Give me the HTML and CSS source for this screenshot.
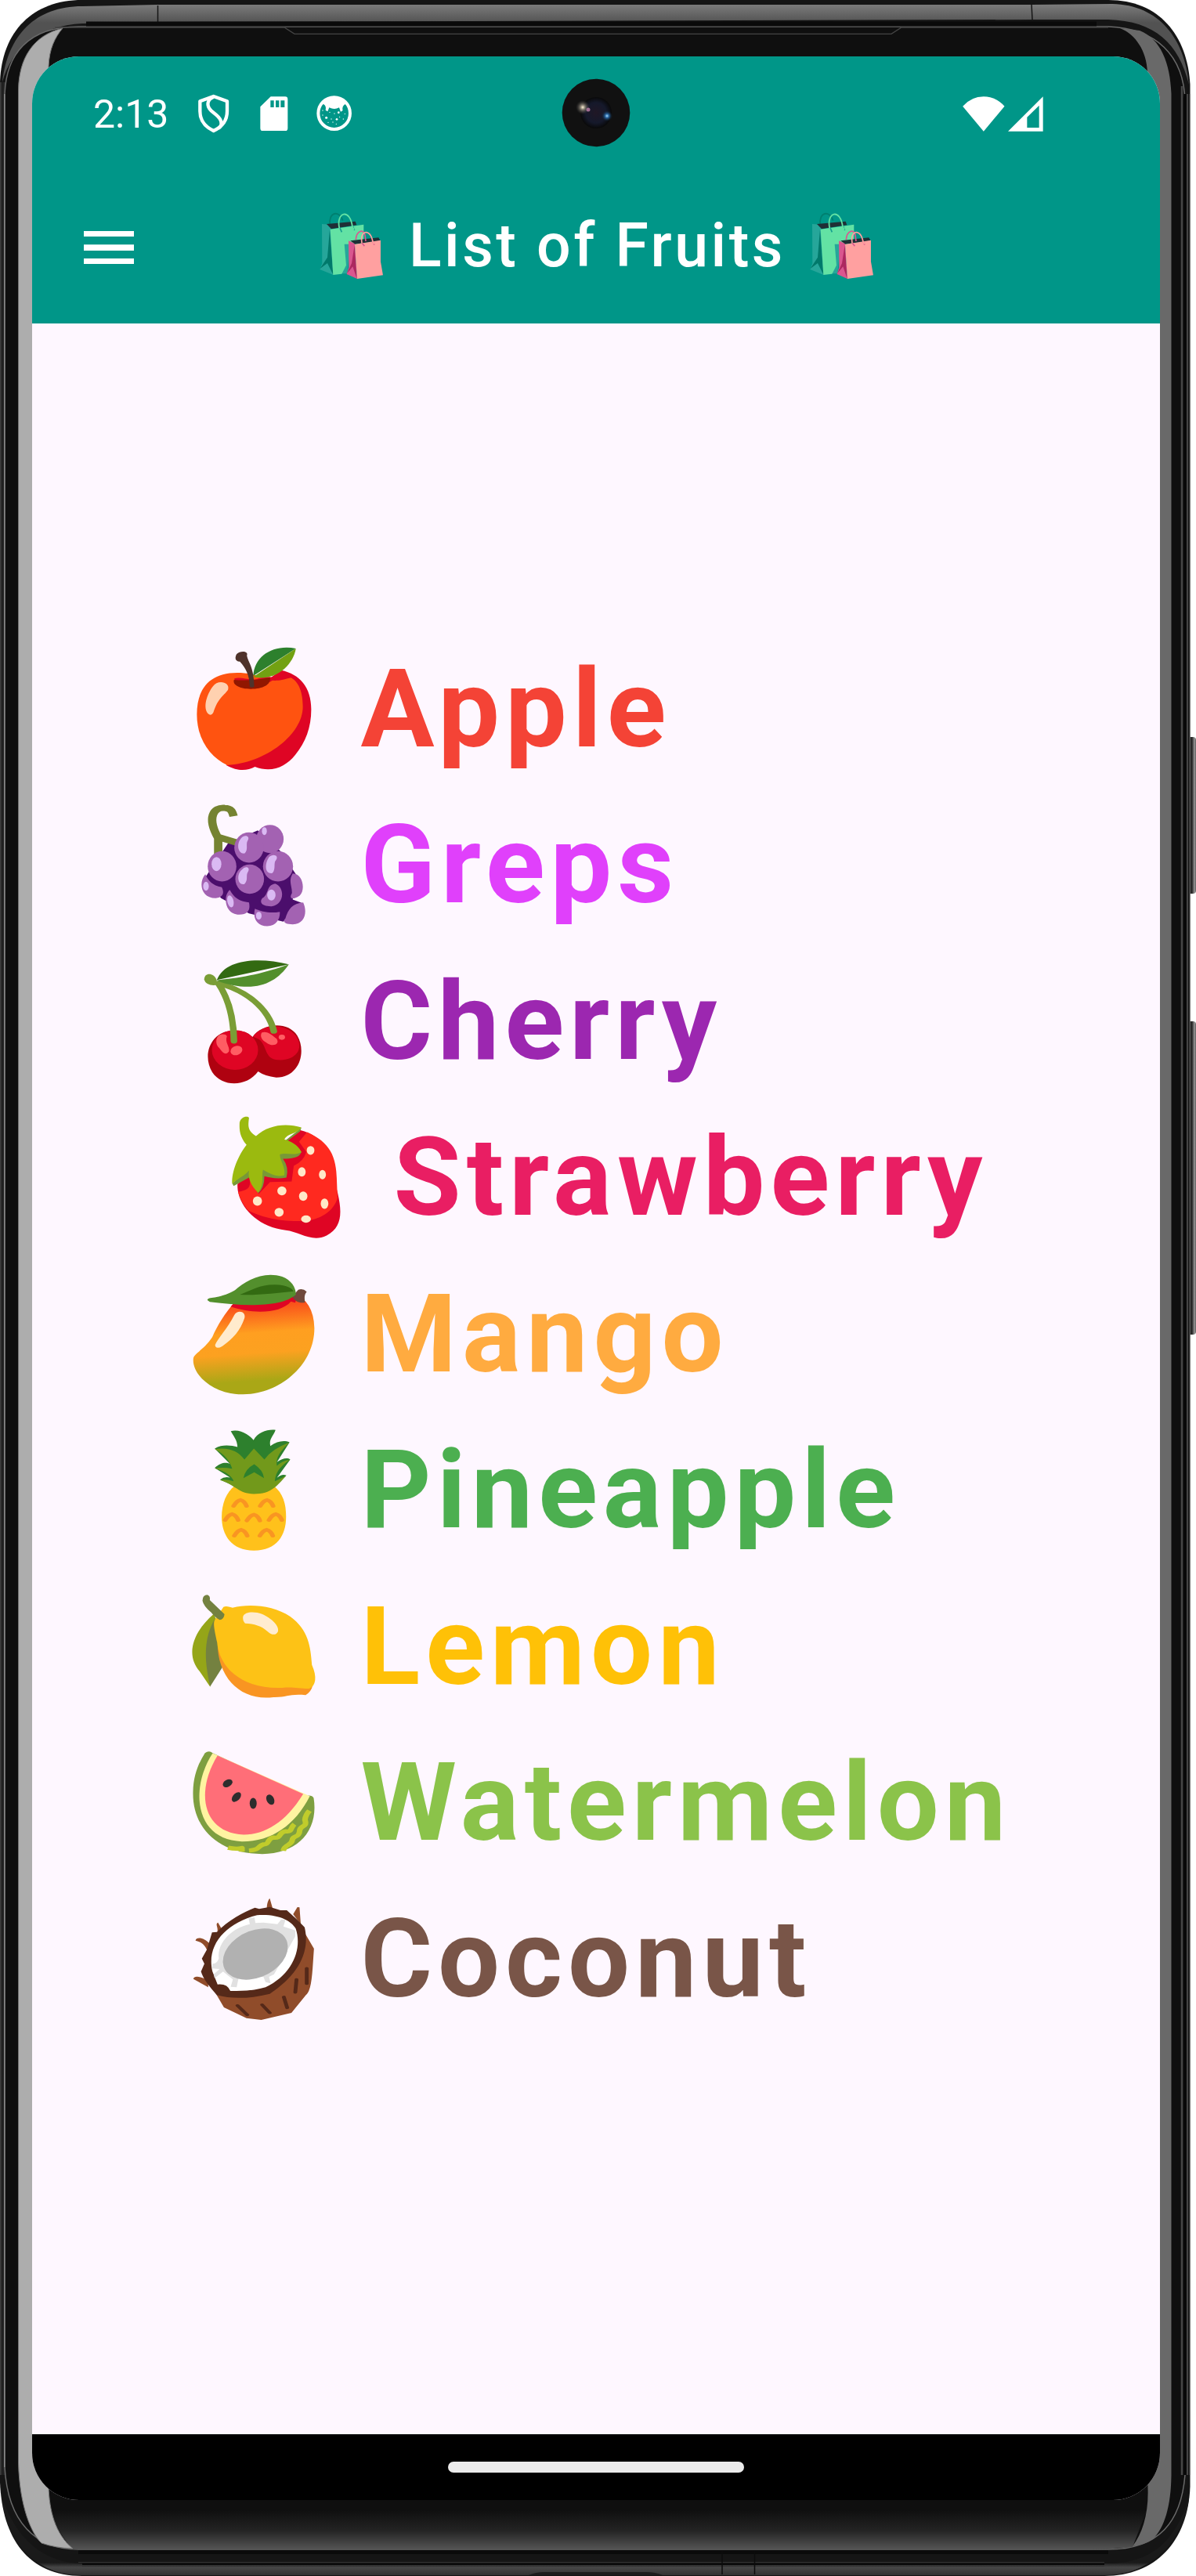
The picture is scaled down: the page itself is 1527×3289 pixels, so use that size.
FILE: index.html
```html
<!DOCTYPE html>
<html lang="en">
<head>
<meta charset="utf-8">
<title>List of Fruits</title>
<link rel="stylesheet" href="styles.css">
</head>
<body>
<div class="phone">
  <svg class="frame" viewBox="0 0 1527 3289" aria-hidden="true">
    <defs>
      <linearGradient id="top" x1="0" y1="6" x2="0" y2="29" gradientUnits="userSpaceOnUse"><stop offset="0" stop-color="#7b7b7b"/><stop offset="1" stop-color="#525252"/></linearGradient>
      <linearGradient id="chin" x1="0" y1="3205" x2="0" y2="3256" gradientUnits="userSpaceOnUse"><stop offset="0" stop-color="#0f0f0f"/><stop offset=".5" stop-color="#232323"/><stop offset="1" stop-color="#565656"/></linearGradient>
      <linearGradient id="base" x1="0" y1="3272" x2="0" y2="3289" gradientUnits="userSpaceOnUse"><stop offset="0" stop-color="#1a1a1a"/><stop offset=".35" stop-color="#474747"/><stop offset="1" stop-color="#303030"/></linearGradient>
      <linearGradient id="edge" x1="0" y1="0" x2="24" y2="0" gradientUnits="userSpaceOnUse"><stop offset="0" stop-color="#444"/><stop offset=".12" stop-color="#1c1c1c"/><stop offset=".4" stop-color="#3a3a3a"/><stop offset=".8" stop-color="#101010"/></linearGradient>
      <linearGradient id="key" x1="1518" y1="0" x2="1527" y2="0" gradientUnits="userSpaceOnUse"><stop offset="0" stop-color="#1c1c1c"/><stop offset=".45" stop-color="#2b2b2b"/><stop offset=".8" stop-color="#999"/><stop offset="1" stop-color="#555"/></linearGradient>
    </defs>
    <rect x="1516" y="941" width="11" height="200" rx="4" fill="url(#key)"/>
    <rect x="1516" y="1304" width="11" height="400" rx="4" fill="url(#key)"/>
    <path fill="#151515" d="M0 105C2 40 42 0 105 0H1415C1480 0 1516 45 1519.500 108V3175C1517 3245 1475 3289 1410 3289H105C35 3289 3 3240 0 3170Z"/>
    <path fill="url(#base)" d="M3 3190C8 3245 45 3288 105 3288H1410C1470 3288 1510 3245 1518 3190C1500 3245 1470 3273 1415 3273H105C55 3273 20 3240 3 3190Z"/>
    <path fill="url(#top)" d="M3 105C10 45 45 8 105 8L201 6H1318L1420 5C1480 6 1513 50 1518 108C1505 55 1475 27 1415 25L1318 25L201 28L105 30C50 33 15 60 3 105Z"/>
    <path d="M201.500 7V28M1317 5L1318 25" stroke="#151515" stroke-width="1.500"/>
    <path fill="url(#edge)" d="M0 105H24V3160H0Z"/>
    <path fill="#0f0f0f" stroke="#6a6a6a" stroke-width="1.500" d="M6 120C8 70 35 34 100 34H1415C1475 36 1512 70 1513 130V3160C1508 3220 1480 3255 1415 3255H100C45 3255 10 3220 6 3150Z"/>
    <path fill="url(#chin)" d="M62 3190H1470L1446 3252Q1420 3255 1380 3255H93Q66 3225 62 3190Z"/>
    <path fill="#0a0a0a" d="M110 27.500H1400V33.500H110Z"/>
    <path fill="none" stroke="#444" stroke-width="1.300" d="M70 35H363L376 43.300H1138L1151 35H1415"/>
    <path fill="#0a0a0a" d="M100 3256H1415V3261H100ZM105 3273H1410V3275H105Z"/>
    <path fill="none" stroke="#333" d="M100 3271.500H1410M105 3276.500H1410"/>
    <path fill="#1c1c1c" d="M675 3288Q684 3284 695 3284H825Q837 3284 846 3288Z"/>
    <path stroke="#0c0c0c" stroke-width="1.500" d="M922 3257V3287M963.500 3257V3287"/>
    <path fill="#adadad" stroke="#737373" d="M80 36C42 45 24 75 23.500 115V3145C25 3200 40 3235 53 3247Q70 3253 93 3254C70 3235 63 3205 62 3175V85C63 62 70 48 80 36Z"/>
    <path fill="#696969" d="M1430 36C1450 44 1464 65 1465 92V3167C1468 3205 1460 3232 1446 3251Q1462 3249 1472 3242C1487 3227 1495 3200 1495.500 3160V120C1494 80 1482 50 1455 39Z"/>
    <path stroke="#464646" stroke-width="2.500" d="M1509 110V3160"/><path stroke="#070707" stroke-width="3" d="M1513 120V3160"/><path stroke="#777" stroke-width="1" d="M1516 120V3160"/>
    <path stroke="#888" stroke-width="1.400" d="M5.700 120V3150"/><path stroke="#777" stroke-width="1" d="M1519.200 120V3160"/>
  </svg>
  <div class="screen">
    <header class="status-bar">
      <div class="notices">
        <time class="clock">2:13</time>
        <svg class="shield" viewBox="756 362 123 150"><path fill="none" stroke="#fff" stroke-width="13" stroke-linejoin="round" d="M818 371L870 390V428C870 464 848 489 818 503C788 489 766 464 766 428V390Z"/><path fill="none" stroke="#fff" stroke-width="13" d="M818 373C792 383 790 408 809 426L828 442C853 463 852 484 836 494"/></svg>
        <svg class="sd" viewBox="995 368 107 134"><path fill="#fff" fill-rule="evenodd" d="M1036 369H1091Q1101 369 1101 379V491Q1101 501 1091 501H1006Q996 501 996 491V408ZM1035 384V410H1048V384ZM1055 384V410H1068V384ZM1074 384V410H1089V384Z"/></svg>
        <svg class="cat" viewBox="1211 368 136 136"><circle cx="1279" cy="436" r="61" fill="none" stroke="#fff" stroke-width="12"/><path fill="#fff" d="M1228 396Q1245 374 1279 374Q1313 374 1330 396L1320 402Q1308 410 1312 425L1304 430L1298 414Q1280 424 1260 414L1254 429L1246 424Q1250 408 1238 401Z"/><g fill="#fff"><circle cx="1249" cy="453" r="4.500"/><circle cx="1289" cy="459" r="4"/><circle cx="1296" cy="433" r="4"/><circle cx="1262" cy="432" r="2"/><circle cx="1280" cy="437" r="2"/><circle cx="1268" cy="458" r="2"/><circle cx="1300" cy="450" r="2"/><circle cx="1314" cy="458" r="2"/><circle cx="1274" cy="470" r="2"/><circle cx="1256" cy="471" r="2"/><circle cx="1287" cy="477" r="2"/><circle cx="1235" cy="443" r="2"/><circle cx="1235" cy="425" r="2"/><circle cx="1320" cy="438" r="2"/></g></svg>
      </div>
      <div class="signals">
        <svg class="wifi" viewBox="236 365 161 135"><path fill="#fff" d="M236.500 403Q270 366 316.500 366T396.500 403L316.500 499Z"/></svg>
        <svg class="cell" viewBox="409 367 135 135"><path fill="#fff" fill-rule="evenodd" d="M409 501L543 368V501ZM482 447V487H528V402Z"/></svg>
      </div>
    </header>
    <div class="app-bar">
      <svg class="menu" viewBox="0 0 64 42"><path fill="#fff" d="M0 0H64V7H0ZM0 17.300H64V25H0ZM0 35H64V42H0Z"/></svg>
      <div class="heading">
        <svg class="bags" viewBox="1220 810 250 262"><use href="#bags"/></svg>
        <h1 class="title">List of Fruits</h1>
        <svg class="bags" viewBox="1220 810 250 262">
          <g id="bags">
            <path fill="none" stroke="#008070" stroke-width="5.500" d="M1263 862C1256 812 1298 803 1312 845"/>
            <path fill="#26a69a" d="M1232 858L1265 860L1276 1053L1224 1032L1233 1009Z"/><path fill="#00796b" d="M1262 880L1275 1052L1253 1008L1224 1030L1253 986Z"/>
            <path fill="#26a69a" d="M1316 930L1340 935L1329 1048L1308 1048Z"/>
            <path fill="#202f36" d="M1250 858L1360 848L1365 862L1268 877Z"/>
            <path fill="#63e2a4" d="M1264 878L1392 860V935H1318L1325 1016L1308 1049L1275 1053Z"/>
            <path fill="none" stroke="#159f8f" stroke-width="5" d="M1301 873L1308 889M1350 866L1357 882"/>
            <path fill="none" stroke="#63e2a4" stroke-width="5.500" d="M1299 875C1285 812 1340 795 1349 870L1355 880"/>
            <path fill="#d9568f" d="M1334 922L1358 933L1367 1068L1327 1050L1335 1024Z"/><path fill="#ac2860" d="M1357 940L1366 1067L1350 1021L1328 1048L1346 1009Z"/>
            <path fill="#202f36" d="M1341 922L1449 910L1456 922L1359 935Z"/>
            <path fill="#ffa0a0" d="M1358 936L1457 920V1002L1466 1054L1367 1068Z"/>
            <path fill="none" stroke="#d9568f" stroke-width="5" d="M1362 918C1365 882 1392 876 1397 900L1400 924M1386 931L1395 943M1426 924L1433 938"/>
            <path fill="none" stroke="#ffa0a0" stroke-width="5" d="M1385 931C1375 885 1417 870 1427 926L1432 935"/>
          </g>
        </svg>
      </div>
    </div>
    <main class="content">
      <ul class="fruits">
        <li class="fruit apple">
          <svg class="emoji" viewBox="50 70 370 490" preserveAspectRatio="none"><path fill="#df0524" d="M155 529C190 555 215 550 237 535C285 560 325 535 352 490C382 440 398 385 398 315C398 230 365 180 312 165L270 205Z"/><path fill="#ff5310" d="M230 180C120 155 71 220 71 335C71 430 110 500 158 529C270 520 374 410 374 305C374 235 356 205 340 194C310 205 295 208 275 202Z"/><path fill="#df0524" d="M178 197C200 188 225 210 250 195C280 185 305 193 280 210H180Z"/><path fill="#911700" d="M177 202Q225 208 280 193C284 220 260 237 225 237C195 237 172 222 177 202Z"/><path fill="#4f332b" d="M222 228C222 185 210 155 194 132C178 132 180 113 185 103C195 88 220 92 214 108C217 135 234 150 235 228Q228 234 222 228Z"/><path fill="#2d802d" d="M232 187C235 110 290 65 354 82Z"/><path fill="#72a112" d="M354 82C347 145 295 210 232 191Z"/><path fill="#ffd1b0" d="M103 332C88 310 98 260 117 227C130 200 167 210 160 240C147 265 132 270 118 327Q112 342 103 332Z"/></svg>
          <span class="name">Apple</span>
        </li>
        <li class="fruit grapes">
          <svg class="emoji" viewBox="50 668.5 370 490" preserveAspectRatio="none"><path fill="#4b0e6c" d="M160 830L245 780L310 860L355 950L345 1045L375 1060L318 1130L220 1098L140 1040L95 960L145 860Z"/><path fill="none" stroke="#758331" stroke-width="24" d="M132 880V810C98 730 120 690 150 694C168 695 172 707 176 726M132 806L190 829"/><g fill="#a362b2"><ellipse cx="280" cy="813" rx="39" ry="54"/><ellipse cx="220" cy="846" rx="42" ry="58"/><ellipse cx="303" cy="918" rx="43" ry="58"/><ellipse cx="143" cy="918" rx="41" ry="58"/><ellipse cx="222" cy="967" rx="41" ry="56"/><path d="M95 948C75 980 82 1040 125 1040C155 1035 145 1005 142 998C115 990 105 975 95 948ZM165 1008C145 1030 150 1103 192 1103C220 1103 224 1080 220 1056C185 1050 175 1030 165 1008ZM295 984C268 990 278 1025 258 1040C245 1065 270 1072 285 1071C320 1065 325 1000 295 984ZM345 945C375 945 382 1010 365 1030C342 1050 334 1040 343 1020C343 990 332 975 345 945ZM375 1056C387 1090 382 1140 345 1140C322 1140 315 1128 324 1118C332 1080 345 1060 375 1056ZM237 1080C230 1115 242 1147 272 1147C300 1147 310 1115 308 1092C280 1100 255 1090 237 1080Z"/></g><g fill="#dab9f3"><ellipse cx="264" cy="783" rx="7" ry="15"/><path d="M197 811C208 793 225 803 216 820C210 834 219 852 208 868C190 873 182 835 197 811ZM277 883C289 866 307 877 297 894C289 906 298 926 287 944C265 948 264 910 277 883ZM199 932C211 912 225 923 217 939C210 953 219 969 207 986C188 993 183 950 199 932Z"/><ellipse cx="127" cy="909" rx="14" ry="27"/><ellipse cx="97" cy="994" rx="8" ry="17"/><ellipse cx="167" cy="1052" rx="9" ry="23" transform="rotate(-8 167 1052)"/><ellipse cx="284" cy="1028" rx="12" ry="21"/><ellipse cx="248" cy="1107" rx="8" ry="15"/></g></svg>
          <span class="name">Greps</span>
        </li>
        <li class="fruit cherry">
          <svg class="emoji" viewBox="50 67 370 490" preserveAspectRatio="none"><path fill="#af0210" d="M230 370C255 320 330 305 358 365C385 425 365 525 298 525Q265 520 246 502C215 560 145 565 115 505C85 440 110 345 178 345Q215 345 230 370Z"/><ellipse cx="180" cy="420" rx="66" ry="76" fill="#df0524"/><path fill="#df0524" d="M232 369C258 320 322 315 354 365C381 420 350 462 303 458C263 456 272 400 248 378Z"/><g fill="none" stroke="#7a9d36" stroke-width="19" stroke-linecap="round"><path d="M132 165C163 225 176 305 177 386M134 165C210 190 276 260 291 348"/></g><path fill="#7a9d36" d="M127 150C120 125 93 120 92 149C94 170 115 175 130 170Z"/><path fill="#336a12" d="M128 152C150 70 250 63 334 92Z"/><path fill="#538f2d" d="M126 153C210 142 265 125 334 92C295 170 230 205 126 153Z"/><g fill="#ff5d63"><path d="M153 361C125 350 120 395 135 412C148 437 155 439 163 425C165 405 150 390 157 367ZM257 353C250 365 257 384 269 391C286 410 310 400 299 377C287 364 272 345 257 353Z"/><ellipse cx="184" cy="422" rx="16" ry="19" transform="rotate(35 184 422)"/><ellipse cx="314" cy="371" rx="9" ry="10"/></g></svg>
          <span class="name">Cherry</span>
        </li>
        <li class="fruit strawberry">
          <svg class="emoji" viewBox="144 665.5 370 490" preserveAspectRatio="none"><path fill="#df0524" d="M365 728C440 755 471 830 471 955C487 1040 488 1100 442 1132C400 1160 365 1118 325 1112C240 1098 185 1015 187 935Z"/><path fill="#ff291f" d="M386 736C452 775 470 830 471 920L473 988C463 1040 420 1075 375 1076C310 1080 250 1060 217 1035Q195 1000 189 965C218 958 225 947 222 920L248 973L280 927L342 925L348 865Q375 850 384 812L363 773Z"/><path fill="#789937" d="M370 719L366 733L331 769L370 811C365 836 340 838 317 838Q335 870 327 910C300 917 280 910 264 905Q264 950 246 970L221 909L176 942L172 932Z"/><path fill="#9bba0f" d="M172 934C169 890 190 823 213 785C194 755 192 730 193 700C196 677 215 672 220 681C217 713 216 730 240 751C275 708 325 700 370 718C355 745 330 740 321 764C350 775 364 795 370 813C348 828 325 812 308 822C310 850 325 870 321 901C300 910 280 895 260 880C255 905 265 935 246 968C225 940 216 910 220 883C207 905 190 910 172 934Z"/><g fill="#ffe9c8"><ellipse cx="396" cy="806" rx="11" ry="17"/><ellipse cx="371" cy="888" rx="11" ry="18"/><ellipse cx="430" cy="899" rx="10" ry="18"/><ellipse cx="314" cy="961" rx="13" ry="17"/><ellipse cx="375" cy="981" rx="12" ry="18"/><ellipse cx="436" cy="1010" rx="11" ry="20"/><ellipse cx="244" cy="1000" rx="13" ry="18"/><ellipse cx="306" cy="1043" rx="13" ry="17"/><ellipse cx="383" cy="1069" rx="14" ry="14"/></g></svg>
          <span class="name">Strawberry</span>
        </li>
        <li class="fruit mango">
          <svg class="emoji" viewBox="50 64 370 490" preserveAspectRatio="none"><defs><linearGradient id="mango" x1=".4" y1="0" x2=".48" y2="1"><stop offset=".06" stop-color="#f83b19"/><stop offset=".4" stop-color="#ff9f20"/><stop offset=".6" stop-color="#fca120"/><stop offset=".87" stop-color="#aaa716"/></linearGradient></defs><path fill="url(#mango)" d="M180 185L345 150Q405 180 407 285C407 430 305 538 203 539C115 540 55 460 61 400C65 380 90 370 115 320C130 275 150 230 180 185Z"/><path fill="#df0524" d="M168 203C230 232 310 230 340 183L352 188L362 150L180 185Z"/><path fill="#70493c" d="M350 155L361 138Q375 132 385 146C377 160 379 170 380 187C365 192 350 180 344 165Z"/><path fill="#538f2d" d="M101 178C103 163 130 178 180 140C210 105 260 65 315 88C340 100 355 130 354 157C315 205 210 203 108 185Z"/><path fill="#336a12" d="M194 157C230 140 250 118 295 119C330 120 345 135 347 144C300 150 245 160 194 157Z"/><path fill="#ffebcd" d="M123 350C130 325 160 285 178 235C188 212 213 222 207 248C195 295 175 325 144 354Q125 369 123 350Z"/></svg>
          <span class="name">Mango</span>
        </li>
        <li class="fruit pineapple">
          <svg class="emoji" viewBox="50 662.5 370 490" preserveAspectRatio="none"><path fill="#ffc11b" d="M180 890H290C318 920 326 960 326 1010C326 1080 300 1139 234 1139C170 1139 142 1080 142 1010C142 960 155 915 180 890Z"/><path fill="#2d802d" d="M122 748C145 730 170 737 187 742C187 715 175 700 168 681C195 670 225 700 233 716C245 685 275 673 296 677C288 705 277 710 281 738C300 720 320 715 336 724L300 800C315 785 330 782 338 790L300 860Q315 843 327 851L295 890H175L137 867Q150 853 166 859L122 822C140 800 155 800 166 807Z"/><path fill="#72991b" d="M122 750C165 742 190 760 207 790L234 748L264 790Q285 750 335 725C305 765 297 785 300 814Q315 795 337 791C300 825 296 850 294 873L326 853C300 890 285 922 234 922C190 922 180 885 137 869Q155 865 176 873Q168 842 122 824Q145 818 172 825Q160 775 122 750Z"/><path fill="#2d802d" d="M204 861Q210 825 235 808Q260 830 263 861L235 839Z"/><g fill="none" stroke="#f99522" stroke-width="13" stroke-linecap="round"><path id="scale" d="M176 968Q185 948 196 945Q208 950 213 968"/><use href="#scale" x="76"/><use href="#scale" x="-24" y="54"/><use href="#scale" x="38" y="56"/><use href="#scale" x="101" y="54"/><use href="#scale" x="2" y="114"/><use href="#scale" x="75" y="114"/></g></svg>
          <span class="name">Pineapple</span>
        </li>
        <li class="fruit lemon">
          <svg class="emoji" viewBox="50 61 370 490" preserveAspectRatio="none"><path fill="#95a518" d="M119 180C55 255 40 340 79 400L109 459L128 205Z"/><path fill="#748140" d="M121 202C92 270 90 350 109 458L146 380L145 280Z"/><path fill="#f99522" d="M130 290C130 430 200 515 290 499C330 500 335 485 382 491Q398 478 402 455Z"/><path fill="#fdc216" d="M147 153C155 148 167 154 173 156C220 140 290 146 338 190C390 240 396 305 400 375C415 420 412 455 392 466C360 466 345 458 315 463C200 470 135 385 129 290C119 230 117 210 124 200Z"/><path fill="#748140" d="M87 129Q87 108 101 107Q110 111 108 127L150 181Q148 202 136 203C128 197 118 185 112 174Q90 150 87 129Z"/><path fill="#ffecd0" d="M203 190C207 171 235 169 257 180C285 197 307 225 303 247C297 265 283 259 275 249C255 224 235 218 209 216Q201 205 203 190Z"/></svg>
          <span class="name">Lemon</span>
        </li>
        <li class="fruit watermelon">
          <svg class="emoji" viewBox="50 659.5 370 490" preserveAspectRatio="none"><path fill="#7e9f40" d="M94 714Q106 703 116 714L381 879Q400 873 405 887C420 1010 360 1101 258 1101C130 1101 60 1000 60 870C60 800 75 755 94 714Z"/><g fill="none" stroke="#c0cc2b" stroke-width="16" stroke-linejoin="round"><path d="M220 1088C252 1085 242 1073 262 1064C280 1066 270 1042 290 1038C315 1042 302 1018 325 1014C345 1018 337 1000 350 987M318 1089C322 1063 342 1070 344 1047C344 1030 365 1040 365 1010C368 989 388 1000 380 970Q382 950 393 935"/><path d="M160 1077Q185 1084 200 1078L200 1092"/></g><path fill="#fff4a1" d="M116 715L394 879C352 990 285 1053 200 1053C65 1048 50 850 116 715Z"/><path fill="#ff6e78" d="M130 724L375 871C325 980 265 1027 205 1027C85 1020 67 860 130 724Z"/><g fill="#2d2d2d"><ellipse cx="159" cy="830" rx="12" ry="17" transform="rotate(35 159 830)"/><ellipse cx="184" cy="883" rx="11" ry="20" transform="rotate(27 184 883)"/><ellipse cx="232" cy="907" rx="10" ry="21"/><ellipse cx="281" cy="893" rx="11" ry="20" transform="rotate(-15 281 893)"/></g></svg>
          <span class="name">Watermelon</span>
        </li>
        <li class="fruit coconut">
          <svg class="emoji" viewBox="41 58 304.700 490" preserveAspectRatio="none"><g fill="#904c2a"><path d="M105 440L310 195L334 262C330 350 330 420 315 440L281 508L210 535L175 528L122 487ZM223 110C223 85 228 71 230 70L238 115ZM285 130L295 103L300 104L303 170ZM106 200C110 180 100 170 108 162L118 190ZM83 270C75 240 65 235 55 231C57 215 75 218 90 245ZM85 410L50 378C52 363 70 370 85 385Z"/></g><path fill="#552919" d="M105 440C90 410 75 385 68 350L76 320L70 300L82 265L94 200L106 198C130 155 170 120 195 105L205 110L230 102L255 115L270 115L294 150L312 180C325 270 300 360 230 435C180 455 140 455 105 440Z"/><path fill="#fff" d="M95 350C80 250 125 165 200 134C250 128 280 155 291 185C307 260 285 360 220 410Q185 427 137 424Q130 395 107 399Z"/><path fill="#e1e1e1" d="M95 320Q105 320 110 300C105 235 145 180 183 168L180 145L194 143L196 164L215 162L248 168L257 150L267 152L262 177L290 192V215L240 360L228 370L232 395L220 390L215 370H157L152 410L138 408L143 380L120 350L100 375L98 360L112 340L94 338Z"/><ellipse cx="196" cy="283" rx="70" ry="103" transform="rotate(24 196 283)" fill="#b1b1b1"/><g stroke="#552919" stroke-width="9" stroke-linecap="round"><path d="M317 337V396M293 380L290 430M263 447L271 489M212 477L230 508M154 480L177 516"/></g></svg>
          <span class="name">Coconut</span>
        </li>
      </ul>
    </main>
    <footer class="nav-bar"><div class="pill"></div></footer>
    <svg class="camera" viewBox="0 0 88 88"><defs><radialGradient id="lens"><stop offset="0" stop-color="#201725"/><stop offset=".65" stop-color="#15192b"/><stop offset="1" stop-color="#090909"/></radialGradient><radialGradient id="glint"><stop offset="0" stop-color="#fff3d6"/><stop offset=".3" stop-color="#8d8578"/><stop offset="1" stop-color="#333" stop-opacity="0"/></radialGradient><radialGradient id="blue"><stop offset="0" stop-color="#a6ddff"/><stop offset=".35" stop-color="#2864a0"/><stop offset="1" stop-color="#123" stop-opacity="0"/></radialGradient></defs><circle cx="44" cy="44" r="43.300" fill="#111"/><circle cx="44" cy="44" r="20" fill="url(#lens)"/><circle cx="27" cy="37" r="9" fill="url(#glint)"/><circle cx="34" cy="40" r="2.500" fill="#a16c92"/><circle cx="58" cy="48" r="7" fill="url(#blue)"/></svg>
  </div>
</div>
</body>
</html>
```
FILE: styles.css
```css
body {
  margin: 0;
  background: #fff;
  font-family: Roboto, "Liberation Sans", sans-serif;
}

svg {
  display: block;
  flex: none;
}

.phone {
  position: relative;
  box-sizing: border-box;
  width: 1527px;
  height: 3289px;
  padding: 72px 46px 97px 41px;
  overflow: hidden;
}

.frame {
  position: absolute;
  inset: 0;
  width: 1527px;
  height: 3289px;
}

.screen {
  position: relative;
  display: flex;
  flex-direction: column;
  height: 3120px;
  border-radius: 60px;
  overflow: hidden;
  background: #fef7ff;
}

.status-bar {
  box-sizing: border-box;
  display: flex;
  justify-content: space-between;
  align-items: center;
  height: 146px;
  padding: 0 149px 0 78px;
  background: #009688;
}

.notices,
.signals {
  display: flex;
  align-items: center;
}

.clock {
  width: 133px;
  padding-top: 2px;
  color: #fff;
  font-size: 50px;
  line-height: 58px;
}

.shield { width: 41px; height: 50px; margin-right: 39px; }
.sd { width: 35.700px; height: 44.700px; margin-right: 36.300px; }
.cat { width: 45.300px; height: 45.300px; }
.wifi { width: 53.700px; height: 45px; margin-right: 4px; }
.cell { width: 45px; height: 45px; }

.camera {
  position: absolute;
  top: 28.300px;
  left: 676px;
  width: 88px;
  height: 88px;
}

.app-bar {
  display: flex;
  align-items: center;
  height: 195px;
  padding-left: 66px;
  background: #009688;
}

.menu {
  width: 64px;
  height: 42px;
  margin-right: 235.700px;
}

.heading {
  display: flex;
  align-items: center;
  padding-bottom: 4px;
}

.bags {
  width: 83.300px;
  height: 87.300px;
}

.title {
  width: 511px;
  margin: 0;
  padding-left: 32px;
  color: #fff;
  font-size: 77px;
  font-weight: 500;
  line-height: 110px;
  letter-spacing: 3.500px;
  white-space: nowrap;
}

.content {
  flex: 1;
  padding: 392.700px 0 0 201.300px;
}

.fruits {
  margin: 0;
  padding: 0;
  list-style: none;
}

.fruit {
  display: flex;
  align-items: center;
  gap: 53px;
  height: 199.500px;
}

.emoji {
  width: 165.200px;
  height: 163.300px;
}

.name {
  font-size: 140px;
  font-weight: 700;
  line-height: 199.500px;
  letter-spacing: 7px;
}

.apple { color: #f44336; }
.grapes { color: #e040fb; }
.cherry { color: #9c27b0; }
.strawberry { color: #e91e63; padding-left: 42px; }
.mango { color: #ffab40; }
.pineapple { color: #4caf50; }
.lemon { color: #ffc107; }
.watermelon { color: #8bc34a; }
.coconut { color: #795548; }

.nav-bar {
  display: flex;
  justify-content: center;
  align-items: center;
  height: 84px;
  background: #000;
}

.pill {
  width: 378px;
  height: 14px;
  border-radius: 7px;
  background: #ebebeb;
}
```
